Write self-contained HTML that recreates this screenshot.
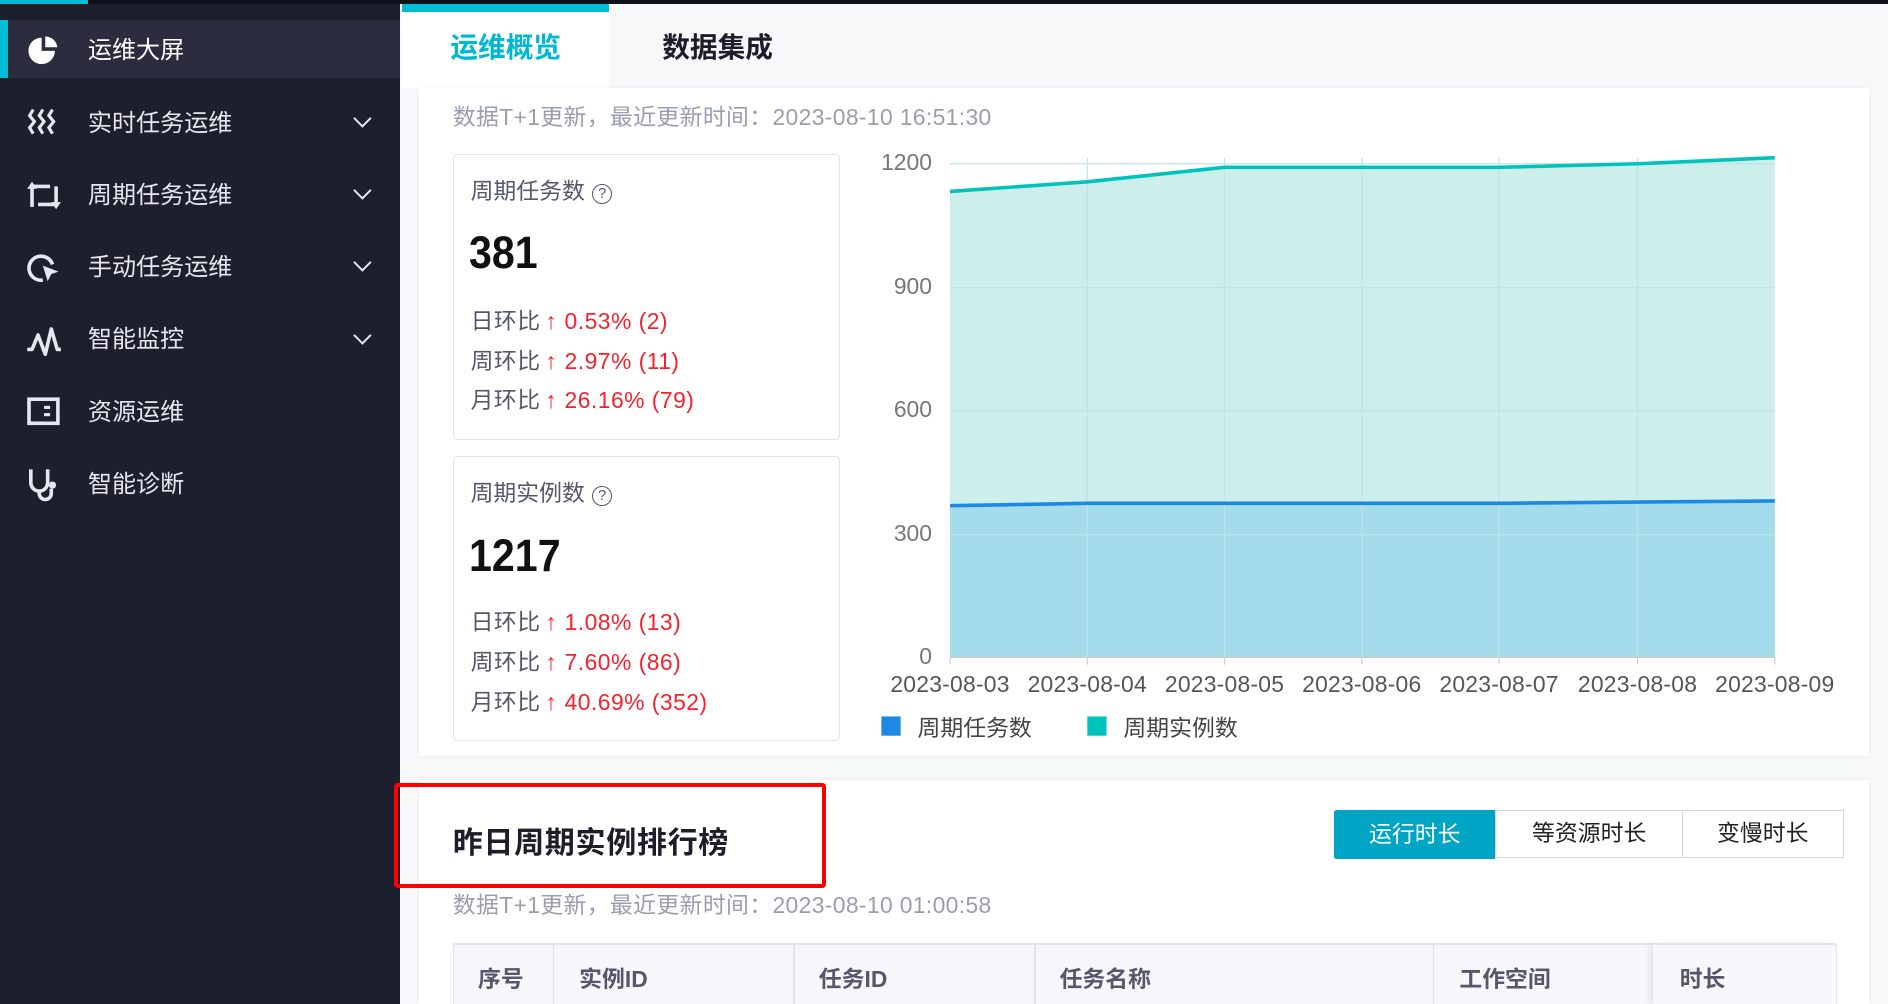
<!DOCTYPE html>
<html style="background:#f7f8fa;width:1888px;height:1004px;overflow:hidden"><head><meta charset="utf-8"><style>
html,body{margin:0;padding:0}
body{width:1568px;height:834px;overflow:hidden;zoom:1.20408;background:#f7f8fa;font-family:"Liberation Sans","Noto Sans CJK SC",sans-serif;position:relative}
.a{position:absolute}
#side{left:0;top:0;width:332px;height:831px;background:#1e1f2c}
.it{position:absolute;left:0;width:332px;height:48px;color:#e4e6f0;font-size:20px;line-height:52px}
.it span{position:absolute;left:73px}
.it .chev{position:absolute;left:296px;top:16px;width:9px;height:9px;border-right:2px solid #e4e6f0;border-bottom:2px solid #e4e6f0;transform:rotate(45deg)}
.ic{position:absolute;left:22px;top:11px}
.panel{background:#fff;box-shadow:0 0 4px rgba(0,0,0,.05)}
.sub{color:#9a9db0;font-size:19px;letter-spacing:.3px}
.card{border:1px solid #e1e3ec;border-radius:4px;background:#fff}
.ct{position:absolute;left:14px;top:14px;font-size:19px;color:#55586a}
.q{display:inline-block;width:15px;height:15px;border:1.5px solid #55586a;border-radius:50%;font-size:12px;line-height:15px;text-align:center;vertical-align:1px;margin-left:6px}
.num{position:absolute;left:13px;font-size:38px;font-weight:bold;color:#111;transform:scaleX(.9);transform-origin:left}
.r{position:absolute;left:14px;font-size:19px;color:#55586a;letter-spacing:.4px}
.r b{color:#f5222d;font-weight:normal}
.r i{font-style:normal;font-weight:bold;color:#f5222d;margin:0 6px 0 4px}
.yl{position:absolute;width:50px;text-align:right;font-size:19px;color:#777;left:724px}
.xl{position:absolute;font-size:19px;color:#555;width:120px;text-align:center;top:557px;letter-spacing:.2px}
.th{position:absolute;top:797px;font-size:19px;font-weight:bold;color:#55586a}
.vl{position:absolute;top:785px;width:1px;height:49px;background:#e2e4ed}
</style></head><body>
<div class="a" style="left:0;top:0;width:1568px;height:3px;background:#0f111a"></div>
<div class="a" style="left:0;top:0;width:73px;height:3px;background:#00bcd4"></div>
<div id="side" class="a" style="top:3px">
 <div class="it" style="top:14px;background:#2b2c3d"><div class="a" style="left:0;top:0;width:7px;height:48px;background:#00bcd4"></div>
  <svg class="ic" width="30" height="28" viewBox="0 0 30 28"><path d="M13 3A11 11 0 1 0 24 14H13Z" fill="#fff"/><path d="M16 2A10 10 0 0 1 26 11H16Z" fill="#fff"/></svg><span style="color:#fff">运维大屏</span></div>
 <div class="it" style="top:74px"><svg class="ic" width="30" height="28" viewBox="0 0 30 28"><g fill="none" stroke="#e4e6f0" stroke-width="2.6"><path d="M6 3L3 8l4 5-4 5 3 5"/><path d="M14 3l-3 5 4 5-4 5 3 5"/><path d="M22 3l-3 5 4 5-4 5 3 5"/></g></svg><span>实时任务运维</span><i class="chev"></i></div>
 <div class="it" style="top:134px"><svg class="ic" width="30" height="28" viewBox="0 0 30 28"><g fill="none" stroke="#e4e6f0" stroke-width="3"><path d="M5 24V7h15"/><path d="M10 22h15V7"/></g><path d="M1 9l4-6 4 6z M21 20l4 6 4-6z" fill="#e4e6f0"/></svg><span>周期任务运维</span><i class="chev"></i></div>
 <div class="it" style="top:194px"><svg class="ic" width="30" height="30" viewBox="0 0 30 30"><path d="M22 12A10 10 0 1 0 14 25" fill="none" stroke="#e4e6f0" stroke-width="3"/><path d="M14 13l13 5-6 2-3 6z" fill="#e4e6f0"/></svg><span>手动任务运维</span><i class="chev"></i></div>
 <div class="it" style="top:254px"><svg class="ic" width="30" height="30" viewBox="0 0 30 30"><path d="M1 22h4l5-12 6 16 5-21 5 17h3" fill="none" stroke="#e4e6f0" stroke-width="3" stroke-linejoin="round"/></svg><span>智能监控</span><i class="chev"></i></div>
 <div class="it" style="top:314px"><svg class="ic" width="30" height="28" viewBox="0 0 30 28"><rect x="2.5" y="3.5" width="24" height="20" fill="none" stroke="#e4e6f0" stroke-width="3"/><rect x="15" y="9" width="5" height="2.6" fill="#e4e6f0"/><rect x="15" y="15" width="5" height="2.6" fill="#e4e6f0"/></svg><span>资源运维</span></div>
 <div class="it" style="top:374px"><svg class="ic" width="30" height="30" viewBox="0 0 30 30"><path d="M4 2v11a7 7 0 0 0 14 0V2" fill="none" stroke="#e4e6f0" stroke-width="3"/><path d="M11 20v2a5 5 0 0 0 10 0v-4" fill="none" stroke="#e4e6f0" stroke-width="3"/><circle cx="22" cy="15" r="3" fill="#e4e6f0"/></svg><span>智能诊断</span></div>
</div>
<div class="a" style="left:334px;top:3px;width:172px;height:70px;background:#fff"></div>
<div class="a" style="left:334px;top:3px;width:172px;height:7px;background:#00bcd4"></div>
<div class="a" style="left:374px;top:21px;font-size:23px;font-weight:bold;color:#00b7d4">运维概览</div>
<div class="a" style="left:550px;top:21px;font-size:23px;font-weight:bold;color:#1d1e2a">数据集成</div>
<div class="a panel" style="left:348px;top:73px;width:1204px;height:555px"></div>
<div class="a sub" style="left:376px;top:81px">数据T+1更新，最近更新时间：2023-08-10 16:51:30</div>
<div class="a card" style="left:376px;top:128px;width:320px;height:236px">
 <div class="ct">周期任务数<span class="q">?</span></div>
 <div class="num" style="top:60px">381</div>
 <div class="r" style="top:122px">日环比<i>↑</i><b>0.53% (2)</b></div>
 <div class="r" style="top:155px">周环比<i>↑</i><b>2.97% (11)</b></div>
 <div class="r" style="top:188px">月环比<i>↑</i><b>26.16% (79)</b></div>
</div>
<div class="a card" style="left:376px;top:379px;width:320px;height:235px">
 <div class="ct">周期实例数<span class="q">?</span></div>
 <div class="num" style="top:60px">1217</div>
 <div class="r" style="top:121px">日环比<i>↑</i><b>1.08% (13)</b></div>
 <div class="r" style="top:154px">周环比<i>↑</i><b>7.60% (86)</b></div>
 <div class="r" style="top:187px">月环比<i>↑</i><b>40.69% (352)</b></div>
</div>
<svg class="a" style="left:0;top:0" width="1568" height="640">
 <polygon points="789,159 903,151 1017,139 1131,139 1245,139 1360,136 1474,131 1474,546 789,546" fill="#ccefec"/>
 <polygon points="789,420 903,418 1017,418 1131,418 1245,418 1360,417 1474,416 1474,546 789,546" fill="#a5dcec"/>
 <g stroke="#bfe3e6" stroke-width="1"><line x1="789" y1="136" x2="1474" y2="136"/><line x1="789" y1="239" x2="1474" y2="239"/><line x1="789" y1="341" x2="1474" y2="341"/><line x1="789" y1="444" x2="1474" y2="444"/>
 <line x1="903" y1="131" x2="903" y2="546"/><line x1="1017" y1="131" x2="1017" y2="546"/><line x1="1131" y1="131" x2="1131" y2="546"/><line x1="1245" y1="131" x2="1245" y2="546"/><line x1="1360" y1="131" x2="1360" y2="546"/></g>
 <line x1="789" y1="546" x2="1474" y2="546" stroke="#ccc"/>
 <g stroke="#ccc"><line x1="789" y1="546" x2="789" y2="552"/><line x1="903" y1="546" x2="903" y2="552"/><line x1="1017" y1="546" x2="1017" y2="552"/><line x1="1131" y1="546" x2="1131" y2="552"/><line x1="1245" y1="546" x2="1245" y2="552"/><line x1="1360" y1="546" x2="1360" y2="552"/><line x1="1474" y1="546" x2="1474" y2="552"/></g>
 <polyline points="789,159 903,151 1017,139 1131,139 1245,139 1360,136 1474,131" fill="none" stroke="#00c4bc" stroke-width="3"/>
 <polyline points="789,420 903,418 1017,418 1131,418 1245,418 1360,417 1474,416" fill="none" stroke="#1e88e5" stroke-width="3"/>
 <rect x="732" y="595" width="16" height="16" fill="#1e88e5"/><rect x="903" y="595" width="16" height="16" fill="#00c4bc"/>
</svg>
<div class="yl" style="top:124px">1200</div><div class="yl" style="top:227px">900</div><div class="yl" style="top:329px">600</div><div class="yl" style="top:432px">300</div><div class="yl" style="top:534px">0</div>
<div class="xl" style="left:729px">2023-08-03</div><div class="xl" style="left:843px">2023-08-04</div><div class="xl" style="left:957px">2023-08-05</div><div class="xl" style="left:1071px">2023-08-06</div><div class="xl" style="left:1185px">2023-08-07</div><div class="xl" style="left:1300px">2023-08-08</div><div class="xl" style="left:1414px">2023-08-09</div>
<div class="a" style="left:762px;top:589px;font-size:19px;color:#444">周期任务数</div>
<div class="a" style="left:933px;top:589px;font-size:19px;color:#444">周期实例数</div>
<div class="a panel" style="left:348px;top:648px;width:1204px;height:186px"></div>
<div class="a" style="left:327px;top:650px;width:352px;height:81px;border:4px solid #ff0000;border-radius:3px"></div>
<div class="a" style="left:376px;top:679px;font-size:25px;font-weight:bold;color:#1d1e2a;letter-spacing:.5px">昨日周期实例排行榜</div>
<div class="a" style="left:1108px;top:673px;width:134px;height:40px;background:#00a5c6;color:#fff;font-size:19px;line-height:40px;text-align:center;border-radius:2px 0 0 2px">运行时长</div>
<div class="a" style="left:1242px;top:673px;width:154px;height:38px;border:1px solid #d3d5e0;font-size:19px;line-height:38px;text-align:center;color:#222">等资源时长</div>
<div class="a" style="left:1397px;top:673px;width:134px;height:38px;border:1px solid #d3d5e0;border-left:none;font-size:19px;line-height:38px;text-align:center;color:#222">变慢时长</div>
<div class="a sub" style="left:376px;top:736px">数据T+1更新，最近更新时间：2023-08-10 01:00:58</div>
<div class="a" style="left:376px;top:783px;width:1149px;height:49px;background:#f6f7fa;border-top:2px solid #e2e4ed"></div>
<div class="a" style="left:1373px;top:783px;width:152px;height:49px;background:#f6f7fa;box-shadow:-3px 0 5px rgba(0,0,0,.08);border-top:2px solid #e2e4ed"></div>
<div class="vl" style="left:376px"></div><div class="vl" style="left:459px"></div><div class="vl" style="left:659px"></div><div class="vl" style="left:859px"></div><div class="vl" style="left:1190px"></div><div class="vl" style="left:1525px"></div>
<div class="th" style="left:397px">序号</div>
<div class="th" style="left:481px">实例ID</div>
<div class="th" style="left:680px">任务ID</div>
<div class="th" style="left:880px">任务名称</div>
<div class="th" style="left:1212px">工作空间</div>
<div class="th" style="left:1395px">时长</div>
</body></html>
